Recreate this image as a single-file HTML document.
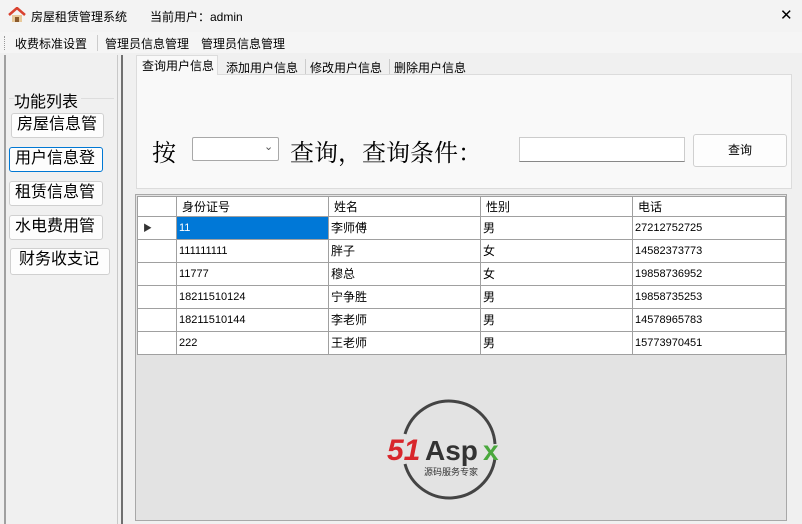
<!DOCTYPE html>
<html><head><meta charset="utf-8"><style>
*{margin:0;padding:0;box-sizing:border-box}
body{width:802px;height:524px;background:#f0f0f0;font-family:"Liberation Sans","Noto Sans CJK SC",sans-serif;position:relative;overflow:hidden;color:#000}
.a{position:absolute}
.t{font-size:12px;white-space:nowrap}
.btn{position:absolute;background:#fdfdfd;border:1px solid #d0d0d0;border-radius:3px;font-size:16px;line-height:22px;padding-left:5px;white-space:nowrap;overflow:hidden}
table{border-collapse:collapse;position:absolute;left:137px;top:196px;font-size:11px;background:#fff}
td{border:1px solid #a0a0a0;height:23px;padding-left:2px;white-space:nowrap;line-height:14px}
tr.h td{height:20px;font-size:12px;padding-left:5px}
td.rh{width:39px;background:#fff}
</style></head><body>
<div class="a" style="left:0;top:0;width:802px;height:32px;background:#f3f3f3"></div>
<svg class="a" style="left:8px;top:7px" width="18" height="16" viewBox="0 0 18 16"><path d="M1 8 L9 1 L17 8" fill="none" stroke="#d9412e" stroke-width="2.5"/><rect x="4" y="8" width="10" height="7" fill="#e8c99a"/><rect x="7" y="10" width="4" height="5" fill="#8b5a2b"/></svg>
<div class="a t" style="left:31px;top:8px;font-size:12px">房屋租赁管理系统</div>
<div class="a t" style="left:150px;top:8px;font-size:12px">当前用户：admin</div>
<div class="a" style="left:780px;top:6px;font-size:15px">✕</div>
<div class="a" style="left:0;top:32px;width:802px;height:21px;background:#f5f5f5"></div>
<div class="a" style="left:4px;top:36px;width:1px;height:14px;border-left:1px dotted #999"></div>
<div class="a t" style="left:15px;top:35px">收费标准设置</div>
<div class="a" style="left:97px;top:35px;width:1px;height:16px;background:#ccc"></div>
<div class="a t" style="left:105px;top:35px">管理员信息管理</div>
<div class="a t" style="left:201px;top:35px">管理员信息管理</div>
<div class="a" style="left:4px;top:55px;width:2px;height:469px;background:#a0a0a0"></div>
<div class="a" style="left:117px;top:55px;width:1px;height:469px;background:#c8c8c8"></div>
<div class="a" style="left:121px;top:55px;width:2px;height:469px;background:#707070"></div>
<div class="a" style="left:9px;top:98px;width:105px;height:1px;background:#ddd"></div>
<div class="a" style="left:14px;top:88px;font-size:16px;background:#f0f0f0;padding-right:3px">功能列表</div>
<div class="btn" style="left:11px;top:113px;width:93px;height:25px">房屋信息管</div>
<div class="btn" style="left:9px;top:147px;width:94px;height:25px;border:1px solid #0078d4;padding-left:5px">用户信息登</div>
<div class="btn" style="left:9px;top:181px;width:94px;height:25px">租赁信息管</div>
<div class="btn" style="left:9px;top:215px;width:94px;height:25px">水电费用管</div>
<div class="btn" style="left:10px;top:248px;width:100px;height:27px;padding-left:8px">财务收支记</div>
<div class="a" style="left:136px;top:74px;width:656px;height:115px;background:#f9f9f9;border:1px solid #dcdcdc"></div>
<div class="a" style="left:136px;top:55px;width:82px;height:20px;background:#f9f9f9;border:1px solid #dcdcdc;border-bottom:none"></div>
<div class="a t" style="left:142px;top:57px">查询用户信息</div>
<div class="a t" style="left:226px;top:59px">添加用户信息</div>
<div class="a" style="left:305px;top:59px;width:1px;height:15px;background:#ccc"></div>
<div class="a t" style="left:310px;top:59px">修改用户信息</div>
<div class="a" style="left:389px;top:59px;width:1px;height:15px;background:#ccc"></div>
<div class="a t" style="left:394px;top:59px">删除用户信息</div>
<div class="a" style="left:152px;top:133px;font-size:24px;font-family:'Noto Serif CJK SC',serif">按</div>
<div class="a" style="left:192px;top:137px;width:87px;height:24px;background:#fff;border:1px solid #a8a8a8;border-radius:2px"></div>
<div class="a" style="left:264px;top:140px;font-size:11px;color:#555">⌄</div>
<div class="a" style="left:290px;top:133px;font-size:24px;font-family:'Noto Serif CJK SC',serif;white-space:nowrap">查询，查询条件：</div>
<div class="a" style="left:519px;top:137px;width:166px;height:25px;background:#fff;border:1px solid #ccc;border-bottom:1px solid #888"></div>
<div class="a" style="left:693px;top:134px;width:94px;height:33px;background:#fdfdfd;border:1px solid #d0d0d0;border-radius:3px;font-size:12px;text-align:center;line-height:31px">查询</div>
<div class="a" style="left:135px;top:194px;width:652px;height:327px;background:#e3e3e3;border:1px solid #a8a8a8"></div>
<table>
<tr class="h"><td class="rh"></td><td style="width:152px">身份证号</td><td style="width:152px">姓名</td><td style="width:152px">性别</td><td style="width:153px">电话</td></tr>
<tr><td class="rh" style="font-size:9px;color:#333;padding-left:5px">▶</td><td style="background:#0078d7;color:#fff">11</td><td style="font-size:12px">李师傅</td><td style="font-size:12px">男</td><td>27212752725</td></tr>
<tr><td class="rh"></td><td>111111111</td><td style="font-size:12px">胖子</td><td style="font-size:12px">女</td><td>14582373773</td></tr>
<tr><td class="rh"></td><td>11777</td><td style="font-size:12px">穆总</td><td style="font-size:12px">女</td><td>19858736952</td></tr>
<tr><td class="rh"></td><td>18211510124</td><td style="font-size:12px">宁争胜</td><td style="font-size:12px">男</td><td>19858735253</td></tr>
<tr><td class="rh"></td><td>18211510144</td><td style="font-size:12px">李老师</td><td style="font-size:12px">男</td><td>14578965783</td></tr>
<tr><td class="rh"></td><td>222</td><td style="font-size:12px">王老师</td><td style="font-size:12px">男</td><td>15773970451</td></tr>
</table>
<svg class="a" style="left:383px;top:398px" width="134" height="102" viewBox="0 0 134 102">
<path d="M22 36 A46 46 0 0 1 112 46" fill="none" stroke="#444" stroke-width="3"/>
<path d="M112 60 A46 46 0 0 1 22 66" fill="none" stroke="#444" stroke-width="3"/>
<text x="4" y="62" font-family="Liberation Sans" font-weight="bold" font-style="italic" font-size="30" fill="#d8262b">51</text>
<text x="42" y="62" font-family="Liberation Sans" font-weight="bold" font-size="28" fill="#333">Asp</text>
<text x="100" y="62" font-family="Liberation Sans" font-weight="bold" font-size="28" fill="#4aa83d">x</text>
<text x="41" y="77" font-family="Noto Sans CJK SC" font-size="9" fill="#333">源码服务专家</text>
</svg>
</body></html>
